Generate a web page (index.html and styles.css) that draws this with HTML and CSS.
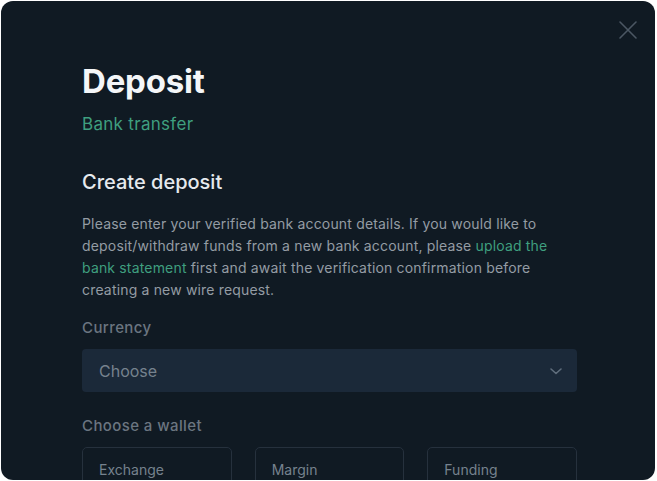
FILE: index.html
```html
<!DOCTYPE html>
<html>
<head>
<meta charset="utf-8">
<link rel="stylesheet" href="styles.css">
</head>
<body>
<div class="modal">
  <button class="close" aria-label="Close">
    <svg width="20" height="20" viewBox="0 0 20 20"><path d="M2 2L18 18M18 2L2 18" stroke="#4b5763" stroke-width="1.6" stroke-linecap="round"/></svg>
  </button>
  <h1 class="title">Deposit</h1>
  <div class="subtitle">Bank transfer</div>
  <h2 class="section">Create deposit</h2>
  <p class="desc">Please enter your verified bank account details. If you would like to deposit/withdraw funds from a new bank account, please <a class="link">upload the bank statement</a> first and await the verification confirmation before creating a new wire request.</p>
  <div class="label">Currency</div>
  <div class="select">
    <span>Choose</span>
    <svg width="14" height="14" viewBox="0 0 14 14"><path d="M2 5L7 9.5L12 5" fill="none" stroke="#5f6d7c" stroke-width="1.6" stroke-linecap="round" stroke-linejoin="round"/></svg>
  </div>
  <div class="label wallet-label">Choose a wallet</div>
  <div class="wallets">
    <div class="wallet">Exchange</div>
    <div class="wallet">Margin</div>
    <div class="wallet">Funding</div>
  </div>
</div>
</body>
</html>
```
FILE: styles.css
```css
* { box-sizing: border-box; }
html, body { margin: 0; padding: 0; background: #ffffff; }
body {
  font-family: Inter, "Noto Sans", sans-serif;
  width: 657px;
  height: 481px;
  overflow: hidden;
  padding: 1px 2px 0 1px;
}
.modal {
  position: relative;
  width: 654px;
  height: 479px;
  background: #101a23;
  border-radius: 12px;
  padding: 58px 78px 0 81px;
  overflow: hidden;
}
.close {
  position: absolute;
  top: 19px;
  right: 17px;
  width: 20px;
  height: 20px;
  padding: 0;
  border: 0;
  background: none;
}
.title {
  margin: 0;
  font-size: 33px;
  line-height: 44px;
  font-weight: 700;
  color: #f4f6f8;
  letter-spacing: -0.2px;
}
.subtitle {
  margin-top: 10px;
  font-size: 17px;
  line-height: 22px;
  letter-spacing: 0.3px;
  color: #3f9f7f;
}
.section {
  margin: 33px 0 0;
  font-size: 20px;
  line-height: 28px;
  font-weight: 500;
  color: #e6eaee;
}
.desc {
  margin: 17px 0 0;
  font-size: 14px;
  line-height: 22px;
  letter-spacing: 0.17px;
  color: #949ca4;
}
.link { color: #3f9f7f; text-decoration: none; }
.label {
  margin-top: 17px;
  font-size: 15px;
  line-height: 20px;
  font-weight: 500;
  letter-spacing: 0.4px;
  color: #6b7580;
}
.select {
  margin-top: 11px;
  height: 43px;
  background: #1b2939;
  border-radius: 4px;
  display: flex;
  align-items: center;
  justify-content: space-between;
  padding: 0 14px 0 17px;
  font-size: 16px;
  color: #76828e;
}
.wallet-label { margin-top: 24px; }
.wallets {
  margin-top: 11px;
  display: grid;
  grid-template-columns: repeat(3, 1fr);
  gap: 23px;
}
.wallet {
  height: 60px;
  border: 1px solid #26313d;
  border-radius: 5px;
  padding: 13px 16px;
  font-size: 14px;
  color: #76828e;
}
```
